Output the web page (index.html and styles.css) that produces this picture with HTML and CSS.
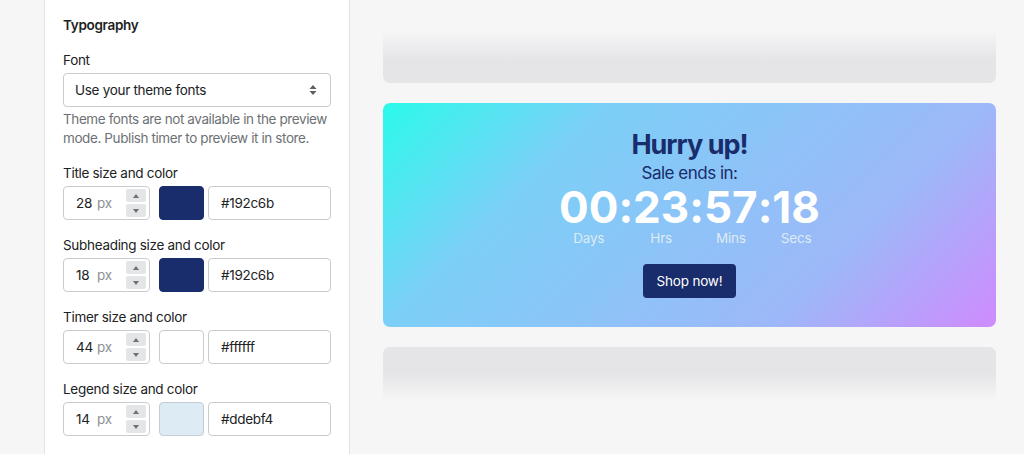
FILE: index.html
```html
<!DOCTYPE html>
<html lang="en">
<head>
<meta charset="utf-8">
<title>Timer typography</title>
<link rel="stylesheet" href="styles.css">
</head>
<body>
<div class="page">
  <div class="gutter"></div>
  <aside class="panel">
    <h2 class="section-title">Typography</h2>

    <div class="field">
      <div class="label">Font</div>
      <div class="select">
        <span>Use your theme fonts</span>
        <svg class="select-arrows" width="8" height="12" viewBox="0 0 8 12"><polygon points="4,1 7.5,5 0.5,5" fill="#5c5f62"/><polygon points="0.5,7 7.5,7 4,11" fill="#5c5f62"/></svg>
      </div>
      <p class="help">Theme fonts are not available in the preview mode. Publish timer to preview it in store.</p>
    </div>

    <div class="field">
      <div class="label">Title size and color</div>
      <div class="row">
        <div class="num"><span class="val">28</span><span class="unit">px</span>
          <div class="stepper">
            <span class="step"><svg width="6" height="4" viewBox="0 0 6 4"><polygon points="3,0 6,4 0,4" fill="#6d7175"/></svg></span>
            <span class="step"><svg width="6" height="4" viewBox="0 0 6 4"><polygon points="0,0 6,0 3,4" fill="#6d7175"/></svg></span>
          </div>
        </div>
        <div class="swatch swatch-navy"></div>
        <div class="hex">#192c6b</div>
      </div>
    </div>

    <div class="field">
      <div class="label">Subheading size and color</div>
      <div class="row">
        <div class="num"><span class="val">18</span><span class="unit">px</span>
          <div class="stepper">
            <span class="step"><svg width="6" height="4" viewBox="0 0 6 4"><polygon points="3,0 6,4 0,4" fill="#6d7175"/></svg></span>
            <span class="step"><svg width="6" height="4" viewBox="0 0 6 4"><polygon points="0,0 6,0 3,4" fill="#6d7175"/></svg></span>
          </div>
        </div>
        <div class="swatch swatch-navy"></div>
        <div class="hex">#192c6b</div>
      </div>
    </div>

    <div class="field">
      <div class="label">Timer size and color</div>
      <div class="row">
        <div class="num"><span class="val">44</span><span class="unit">px</span>
          <div class="stepper">
            <span class="step"><svg width="6" height="4" viewBox="0 0 6 4"><polygon points="3,0 6,4 0,4" fill="#6d7175"/></svg></span>
            <span class="step"><svg width="6" height="4" viewBox="0 0 6 4"><polygon points="0,0 6,0 3,4" fill="#6d7175"/></svg></span>
          </div>
        </div>
        <div class="swatch swatch-white"></div>
        <div class="hex">#ffffff</div>
      </div>
    </div>

    <div class="field">
      <div class="label">Legend size and color</div>
      <div class="row">
        <div class="num"><span class="val">14</span><span class="unit">px</span>
          <div class="stepper">
            <span class="step"><svg width="6" height="4" viewBox="0 0 6 4"><polygon points="3,0 6,4 0,4" fill="#6d7175"/></svg></span>
            <span class="step"><svg width="6" height="4" viewBox="0 0 6 4"><polygon points="0,0 6,0 3,4" fill="#6d7175"/></svg></span>
          </div>
        </div>
        <div class="swatch swatch-legend"></div>
        <div class="hex">#ddebf4</div>
      </div>
    </div>
  </aside>

  <main class="preview">
    <div class="skeleton skeleton-top"></div>
    <section class="banner">
      <h1 class="banner-title">Hurry up!</h1>
      <p class="banner-sub">Sale ends in:</p>
      <div class="timer">
        <span class="digits">00</span><span class="colon">:</span>
        <span class="digits">23</span><span class="colon">:</span>
        <span class="digits">57</span><span class="colon">:</span>
        <span class="digits">18</span>
        <span class="legend">Days</span><span></span>
        <span class="legend">Hrs</span><span></span>
        <span class="legend">Mins</span><span></span>
        <span class="legend">Secs</span>
      </div>
      <button class="shop-btn">Shop now!</button>
    </section>
    <div class="skeleton skeleton-bottom"></div>
  </main>
</div>
</body>
</html>
```

FILE: styles.css
```css
* { box-sizing: border-box; }

html, body {
  margin: 0;
  padding: 0;
  height: 100%;
}

body {
  background: #f6f6f7;
  font-family: Inter, "Liberation Sans", sans-serif;
  color: #202223;
  overflow: hidden;
}

.page {
  display: flex;
  height: 454px;
}

.gutter {
  width: 44px;
  flex: none;
}

.panel {
  width: 306px;
  flex: none;
  background: #ffffff;
  border-left: 1px solid #e1e3e5;
  border-right: 1px solid #e1e3e5;
  padding: 15px 18px 0 18px;
  font-size: 13.5px;
  letter-spacing: -0.3px;
}

.section-title {
  margin: 0 0 15px 0;
  font-size: 13.5px;
  font-weight: 600;
  line-height: 20px;
}

.field {
  margin-bottom: 15px;
}

.label {
  line-height: 20px;
  margin-bottom: 3px;
}

.select {
  height: 34px;
  border: 1px solid #c9cccf;
  border-radius: 4px;
  display: flex;
  align-items: center;
  justify-content: space-between;
  padding: 0 13px 0 11px;
  line-height: 20px;
}

.help {
  margin: 3px -2px 0 0;
  line-height: 19px;
  color: #6d7175;
  letter-spacing: -0.4px;
}

.row {
  display: flex;
  align-items: stretch;
  height: 34px;
}

.num {
  width: 87px;
  border: 1px solid #c9cccf;
  border-radius: 4px;
  display: flex;
  align-items: center;
  padding: 0 3px 0 12px;
}

.val {
  width: 21px;
}

.unit {
  color: #8c9196;
  flex: 1;
}

.stepper {
  display: flex;
  flex-direction: column;
  gap: 2px;
  width: 20px;
}

.step {
  height: 13px;
  background: #e4e5e7;
  border-radius: 2px;
  display: flex;
  align-items: center;
  justify-content: center;
}

.step svg { display: block; }

.swatch {
  width: 45px;
  margin-left: 9px;
  border: 1px solid #c9cccf;
  border-radius: 4px;
}

.swatch-navy { background: #192c6b; border-color: #192c6b; }
.swatch-white { background: #ffffff; }
.swatch-legend { background: #ddebf4; border-color: #c4cdd5; }

.hex {
  flex: 1;
  margin-left: 4px;
  border: 1px solid #c9cccf;
  border-radius: 4px;
  display: flex;
  align-items: center;
  padding: 0 12px;
}

.preview {
  flex: 1;
  padding: 0 28px 0 33px;
  display: flex;
  flex-direction: column;
  gap: 20px;
}

.skeleton {
  border-radius: 7px;
  flex: none;
}

.skeleton-top {
  height: 83px;
  background: linear-gradient(to bottom, rgba(228, 229, 231, 0) 30px, #e5e5e7 60px);
}

.skeleton-bottom {
  height: 56px;
  background: linear-gradient(to bottom, #e5e5e7 26px, rgba(228, 229, 231, 0) 54px);
}

.banner {
  flex: none;
  height: 224px;
  border-radius: 7px;
  background: linear-gradient(135deg, #2bfaeb 0%, #7ccff7 27%, #9db8f8 73%, #cf8bfe 100%);
  display: flex;
  flex-direction: column;
  align-items: center;
  padding-top: 25px;
  text-align: center;
}

.banner-title {
  margin: 0;
  font-size: 27px;
  font-weight: 700;
  line-height: 34px;
  color: #192c6b;
  letter-spacing: -1px;
}

.banner-sub {
  margin: 0;
  font-size: 17px;
  line-height: 22px;
  color: #192c6b;
  letter-spacing: -0.5px;
}

.timer {
  margin-top: 2px;
  display: grid;
  grid-template-columns: repeat(7, auto);
  justify-items: center;
  color: #ffffff;
}

.digits, .colon {
  font-size: 44px;
  font-weight: 700;
  line-height: 42px;
}

.legend {
  font-size: 13.5px;
  line-height: 20px;
  color: #ddebf4;
  letter-spacing: -0.2px;
}

.shop-btn {
  margin-top: 16px;
  height: 34px;
  padding: 0 14px;
  border: none;
  border-radius: 4px;
  background: #192c6b;
  color: #ffffff;
  font-family: Inter, "Liberation Sans", sans-serif;
  font-size: 13.5px;
  letter-spacing: -0.2px;
}
```
